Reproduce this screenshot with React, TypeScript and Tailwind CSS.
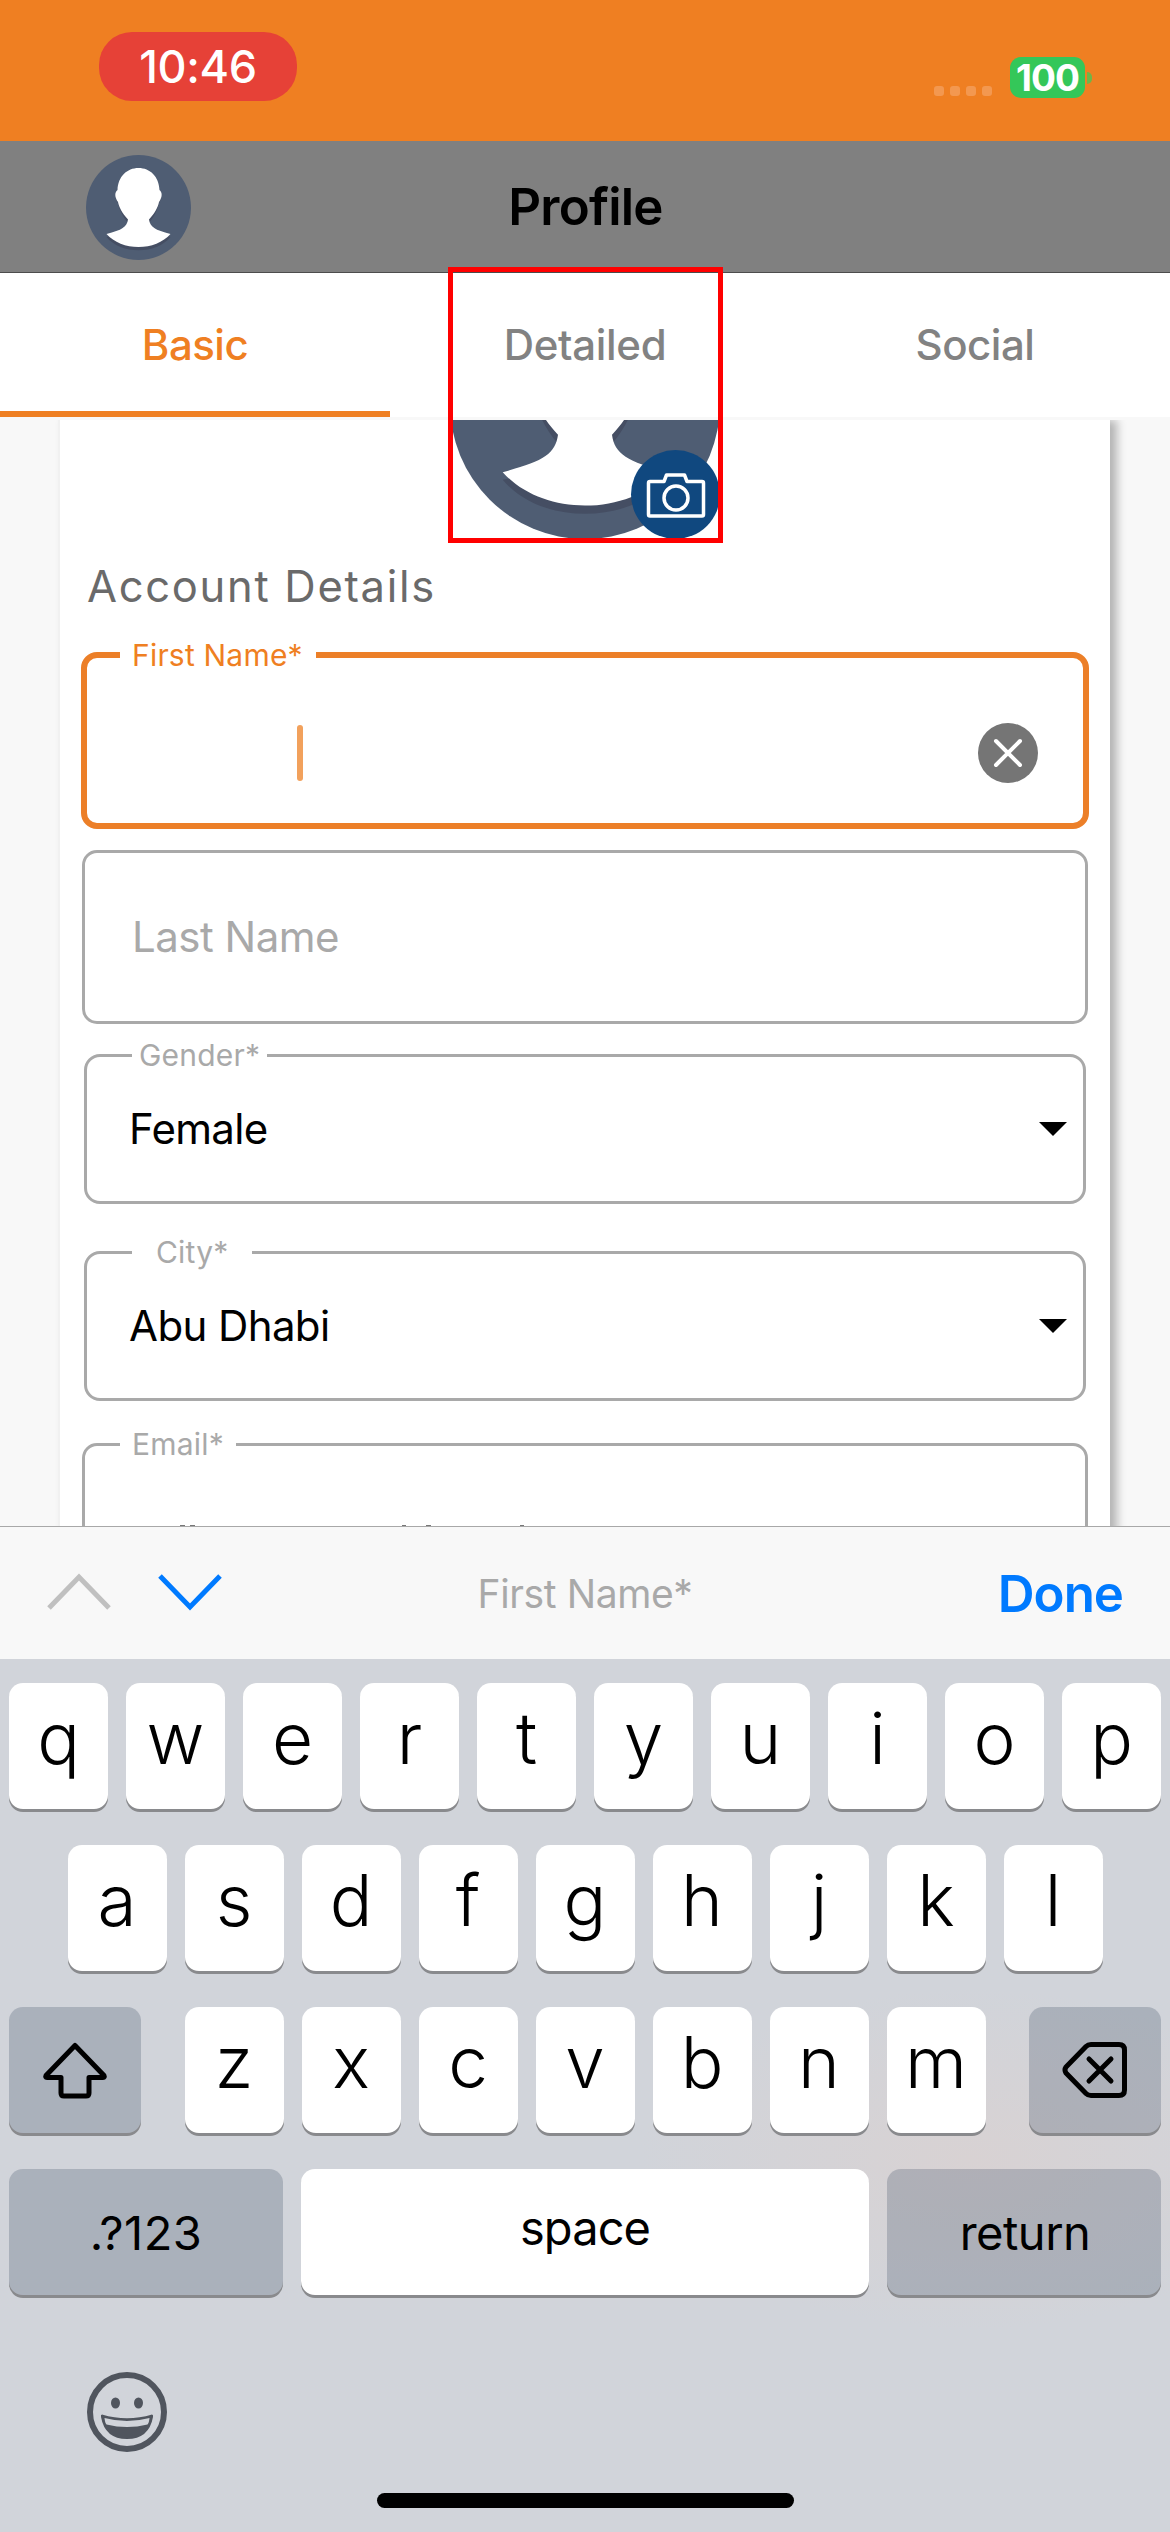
import React from "react";

function Avatar({ className }: { className: string }) {
  return (
    <svg viewBox="0 0 105 105" className={className}>
      <circle cx="52.5" cy="52.5" r="52.5" fill="#4f5d73" />
      <path
        d="M52.5 15.5C41 15.5 32 24 31.5 37C29 39 29 44 32 48C33 53 36 61 42 68C42 74 36 78 20.5 82C28 91 40 95.2 52.5 95.2S77 91 84.5 82C69 78 64 74 63 68C69 61 72 53 73 48C76 44 76 39 73.500 37C73 24 64 15.500 52.500 15.500Z"
        fill="#454e63"
      />
      <path
        d="M52.500 13C41 13 32 21.500 31.500 35C28.500 37.500 28.500 42 32 47C33 52 36 58 42 64.500C41 72 36 75 20.500 79C28 87.500 40 92 52.500 92S77 87.500 84.500 79C69 75 64 72 63 64.500C69 58 72 52 73 47C76.500 42 76.500 37.500 73.500 35C73 21.500 64 13 52.500 13Z"
        fill="#fff"
      />
    </svg>
  );
}

function StatusBar() {
  return (
    <div className="flex h-[141px] shrink-0 justify-between bg-[#ef7f22] pl-[99px] pr-[78px] text-white">
      <div className="mt-[32px] flex h-[69px] w-[198px] items-center justify-center rounded-[33px] bg-[#e64137] text-[45px] font-medium tracking-[-0.3px]">
        10:46
      </div>
      <div className="mt-[57px] flex h-[41px] items-center">
        <div className="mr-[18px] mt-[27px] flex gap-[6px]">
          {[0, 1, 2, 3].map((i) => (
            <span key={i} className="size-[10px] rounded-[3px] bg-[#f39850]" />
          ))}
        </div>
        <div className="flex h-[41px] w-[75px] items-center justify-center rounded-[11px] bg-[#34c759] text-[37px] font-bold tracking-[-1px]">
          100
        </div>
        <span className="ml-[2px] h-[12px] w-[5px] rounded-r-full bg-[#6fb548]" />
      </div>
    </div>
  );
}

function Header() {
  return (
    <div className="flex h-[132px] shrink-0 items-center border-b border-[#4c4c4c] bg-[#808080]">
      <div className="w-[390px] pl-[86px] pt-px">
        <Avatar className="size-[105px]" />
      </div>
      <div className="w-[390px] pl-px text-center text-[51px] font-semibold leading-none tracking-[-0.8px] text-black">
        Profile
      </div>
    </div>
  );
}

function Tabs() {
  return (
    <div className="grid h-[147px] shrink-0 grid-cols-3 border-b-[3px] border-[#f8f8f8] bg-white text-[42px] font-medium leading-none text-[#828282]">
      <div className="flex items-center justify-center border-y-[6px] border-b-[#ef7f22] border-t-transparent tracking-[-0.5px] text-[#ef7f22]">
        Basic
      </div>
      <div className="flex items-center justify-center tracking-[-0.3px]">Detailed</div>
      <div className="flex items-center justify-center tracking-[-0.5px]">Social</div>
    </div>
  );
}

function CameraBadge() {
  return (
    <div className="absolute right-0 top-[30px] flex size-[89px] items-center justify-center rounded-full bg-[#10487f]">
      <svg viewBox="0 0 60 46" className="h-[46px] w-[60px]" fill="none" stroke="#fff" strokeWidth="3.500" strokeLinejoin="round">
        <path d="M4 9.500H18L20.500 3H38.500L41 9.500H56Q57.500 9.500 57.500 11V42.500Q57.500 44 56 44H4Q2.500 44 2.500 42.500V11Q2.500 9.500 4 9.500Z" />
        <circle cx="30" cy="26" r="12" />
      </svg>
    </div>
  );
}

function Caret() {
  return (
    <svg viewBox="0 0 28 14" className="h-[14px] w-[28px]">
      <path d="M0 0H28L14 14Z" />
    </svg>
  );
}

function Card() {
  return (
    <div className="h-[1106px] shrink-0 overflow-hidden bg-[#f8f8f8] pl-[58px]">
      <div className="flex h-[1200px] w-[1052px] flex-col border-l-2 border-[#f1f1f1] bg-white shadow-[7px_0_9px_rgba(0,0,0,0.28)]">
        <div className="relative ml-[390px] h-[120px] w-[270px]">
          <div className="h-full overflow-hidden">
            <Avatar className="-mt-[151px] size-[270px]" />
          </div>
          <CameraBadge />
        </div>
        <div className="ml-[27px] mt-[20px] h-[52px] text-[43.500px] leading-[52px] text-[#6a6a6a]">
          <span className="tracking-[1.700px]">Account Details</span>
        </div>

        <div className="relative ml-[21px] mt-[40px] flex h-[177px] w-[1008px] items-center rounded-[16px] border-[6px] border-[#ec7f28] pl-[210px] pr-[45px] pt-[24px]">
          <span className="absolute -top-[21px] left-[33px] w-[196px] bg-white pl-[12px] text-[30px] leading-[36px] tracking-[0.200px] text-[#ef7f22]">
            First Name*
          </span>
          <span className="h-[56px] w-[6px] rounded-full bg-[#f2a15c]" />
          <span className="ml-auto flex size-[60px] items-center justify-center rounded-full bg-[#757575]">
            <svg viewBox="0 0 30 30" className="size-[30px]" stroke="#fff" strokeWidth="4" strokeLinecap="round">
              <path d="M3 3L27 27M27 3L3 27" />
            </svg>
          </span>
        </div>

        <div className="ml-[22px] mt-[21px] flex h-[174px] w-[1006px] items-center rounded-[15px] border-[3px] border-[#a9a9a9] pl-[47px] text-[42px] leading-none tracking-[-0.500px] text-[#a9a9a9]">
          Last Name
        </div>

        <div className="relative ml-[24px] mt-[30px] flex h-[150px] w-[1002px] items-center justify-between rounded-[16px] border-[3px] border-[#a9a9a9] pl-[42px] pr-[16px] text-[42px] leading-none tracking-[-0.700px] text-black">
          <span className="absolute -top-[20px] left-[45px] w-[135px] bg-white pl-[7px] text-[30px] leading-[36px] tracking-[0.200px] text-[#a9a9a9]">
            Gender*
          </span>
          Female
          <Caret />
        </div>

        <div className="relative ml-[24px] mt-[47px] flex h-[150px] w-[1002px] items-center justify-between rounded-[16px] border-[3px] border-[#a9a9a9] pl-[42px] pr-[16px] text-[42px] leading-none tracking-[-0.600px] text-black">
          <span className="absolute -top-[20px] left-[45px] w-[120px] bg-white pl-[24px] text-[30px] leading-[36px] tracking-[0.200px] text-[#a9a9a9]">
            City*
          </span>
          Abu Dhabi
          <Caret />
        </div>

        <div className="relative ml-[22px] mt-[42px] h-[174px] w-[1006px] rounded-[15px] border-[3px] border-[#a9a9a9]">
          <span className="absolute -top-[20px] left-[35px] w-[116px] bg-white pl-[12px] text-[30px] leading-[36px] tracking-[0.200px] text-[#a9a9a9]">
            Email*
          </span>
          <svg viewBox="0 0 360 2" className="ml-[94px] mt-[79px] h-[2px] w-[360px]" fill="#777">
            <path d="M1 0h5v2h-5zM11 0h5v2h-5zM223 0h4v2h-4zM247 0h5v2h-5zM341 0h4v2h-4z" />
          </svg>
        </div>
      </div>
    </div>
  );
}

function Toolbar() {
  return (
    <div className="grid h-[133px] shrink-0 grid-cols-3 items-center border-t border-[#a8a8a8] bg-[#f8f8f8]">
      <div className="flex items-center gap-[45px] pb-[2px] pl-[46px]">
        <svg viewBox="0 0 66 40" className="h-[40px] w-[66px]" fill="none" stroke="#c0c0c0" strokeWidth="5">
          <path d="M3 36L33 5L63 36" />
        </svg>
        <svg viewBox="0 0 66 40" className="h-[40px] w-[66px]" fill="none" stroke="#007aff" strokeWidth="5">
          <path d="M3 4L33 35L63 4" />
        </svg>
      </div>
      <div className="text-center text-[39px] leading-none tracking-[-0.400px] text-[#a9a9a9]">First Name*</div>
      <div className="pr-[47px] text-right text-[51px] font-semibold leading-none tracking-[-1px] text-[#007aff]">Done</div>
    </div>
  );
}

function Letter({ children }: { children: React.ReactNode }) {
  return (
    <div className="h-[126px] w-[99px] rounded-[14px] bg-white text-center text-[71px] font-[350] leading-[110px] shadow-[0_3px_0_#898a8d]">
      {children}
    </div>
  );
}

function DarkKey({ className, children }: { className: string; children: React.ReactNode }) {
  return (
    <div
      className={`flex h-[126px] items-center justify-center rounded-[14px] bg-[#384860]/25 text-[47px] leading-none shadow-[0_3px_0_#898a8d] ${className}`}
    >
      {children}
    </div>
  );
}

function Keyboard() {
  return (
    <div className="flex flex-1 flex-col gap-[36px] bg-[#d1d4da] bg-[radial-gradient(ellipse_330px_170px_at_970px_500px,#d8d2d3,#d1d4da)] px-[9px] pt-[24px] text-black">
      <div className="flex gap-[18px]">
        {"qwertyuiop".split("").map((k) => (
          <Letter key={k}>{k}</Letter>
        ))}
      </div>
      <div className="flex justify-center gap-[18px]">
        {"asdfghjkl".split("").map((k) => (
          <Letter key={k}>{k}</Letter>
        ))}
      </div>
      <div className="flex justify-between">
        <DarkKey className="w-[132px]">
          <svg viewBox="0 0 66 58" className="h-[58px] w-[66px]" fill="none" stroke="#000" strokeWidth="5" strokeLinejoin="round">
            <path d="M33 4.500L62 34.500Q63 36.500 61 36.500H47V52Q47 55 44 55H22Q19 55 19 52V36.500H5Q3 36.500 4 34.500Z" />
          </svg>
        </DarkKey>
        <div className="flex gap-[18px]">
          {"zxcvbnm".split("").map((k) => (
            <Letter key={k}>{k}</Letter>
          ))}
        </div>
        <DarkKey className="w-[132px]">
          <svg viewBox="0 0 68 58" className="h-[58px] w-[68px]" fill="none" stroke="#000" strokeWidth="5" strokeLinejoin="round" strokeLinecap="round">
            <path d="M30 3.500H58Q63.500 3.500 63.500 9V49Q63.500 54.500 58 54.500H30Q27 54.500 25 52.500L5 32Q3 29 5 26L25 5.500Q27 3.500 30 3.500Z" />
            <path d="M28 18L50 40M50 18L28 40" />
          </svg>
        </DarkKey>
      </div>
      <div className="flex gap-[18px]">
        <DarkKey className="w-[274px]">
          <span className="tracking-[0.500px]">.?123</span>
        </DarkKey>
        <div className="h-[126px] w-[568px] rounded-[14px] bg-white text-center text-[47px] leading-[118px] tracking-[-0.900px] shadow-[0_3px_0_#898a8d]">
          space
        </div>
        <DarkKey className="w-[274px]">
          <span className="pl-[2px] tracking-[-0.500px]">return</span>
        </DarkKey>
      </div>
      <div className="pl-[78px] pt-[41px]">
        <svg viewBox="0 0 80 80" className="size-[80px]">
          <circle cx="40" cy="40" r="37" fill="none" stroke="#50555e" strokeWidth="6" />
          <ellipse cx="28.500" cy="31" rx="4.500" ry="5.500" fill="#50555e" />
          <ellipse cx="51.500" cy="31" rx="4.500" ry="5.500" fill="#50555e" />
          <path d="M15 42.500Q40 50 65 42.500Q66.500 42.500 66 45Q62 67 40 67T14 45Q13.500 42.500 15 42.500Z" fill="#50555e" />
          <path d="M17.500 46Q40 52 62.500 46Q62 51 60.500 52.500Q40 57.500 19.500 52.500Q18 51 17.500 46Z" fill="#d1d4da" />
        </svg>
      </div>
      <div className="mx-auto mt-[5px] h-[15px] w-[417px] rounded-full bg-black" />
    </div>
  );
}

export default function App() {
  return (
    <div className="relative flex h-[2532px] w-[1170px] flex-col overflow-hidden bg-white font-['Inter',sans-serif]">
      <StatusBar />
      <Header />
      <Tabs />
      <Card />
      <Toolbar />
      <Keyboard />
      <div className="absolute left-[448px] top-[267px] h-[276px] w-[275px] border-[5px] border-[#ff0000]" />
    </div>
  );
}
